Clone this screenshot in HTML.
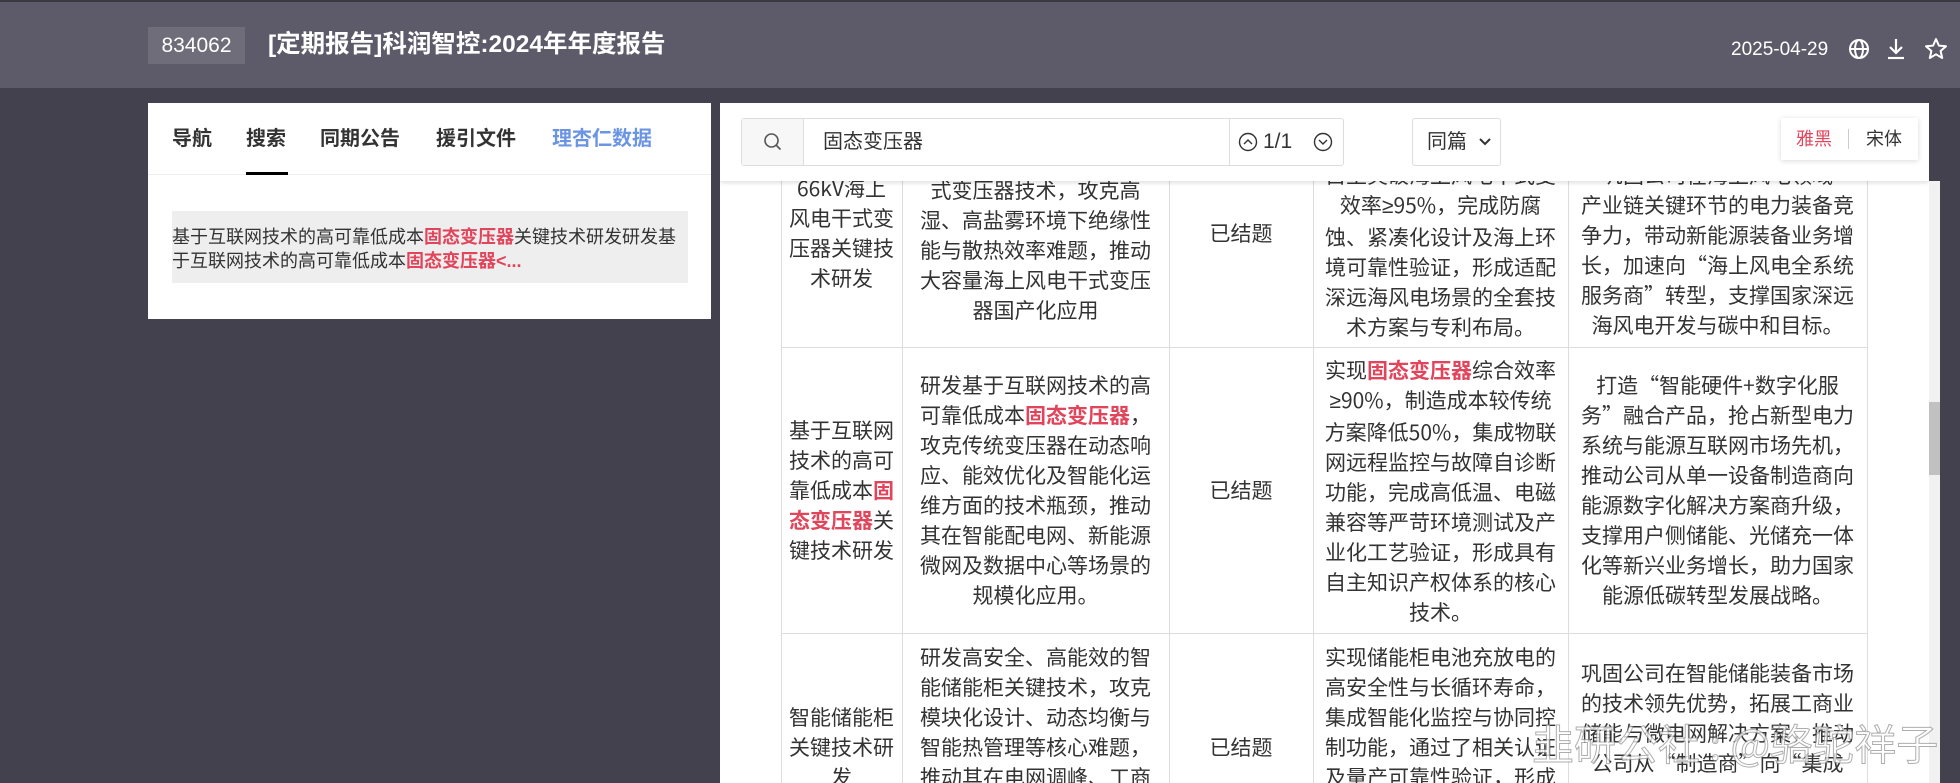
<!DOCTYPE html>
<html><head><meta charset="utf-8"><style>
*{margin:0;padding:0;box-sizing:border-box}
body{width:1960px;height:783px;overflow:hidden;background:#42414d;font-family:"Liberation Sans","Noto Sans CJK SC",sans-serif;color:#333;position:relative}
.abs{position:absolute}
#hdr{left:0;top:0;width:1960px;height:88px;background:#5d5b69;border-top:2px solid #3a3940}
.code{left:148px;top:25px;width:97px;height:37px;background:#6f6d79;color:#fff;font-size:21px;line-height:37px;text-align:center}
.title{left:268px;top:24px;height:37px;line-height:37px;color:#fff;font-size:24.5px;font-weight:bold;white-space:nowrap}
.date{left:1731px;top:36px;color:#fff;font-size:19px;line-height:24px}
#lp{left:148px;top:103px;width:563px;height:216px;background:#fff}
.tab{top:24px;font-size:20px;font-weight:bold;line-height:24px;color:#333}
.res{left:24px;top:108px;width:516px;height:72px;background:#eee;font-size:18px;line-height:24px;padding:14px 0 0 0;color:#333}
.hl{color:#e0455b;font-weight:bold}
.ge{font-family:"Liberation Sans",sans-serif}
#rp{left:720px;top:103px;width:1209px;height:680px;background:#fff;overflow:hidden}
#tb{left:0;top:0;width:1209px;height:78px;background:#fff;box-shadow:0 2px 4px rgba(0,0,0,.12);z-index:5}
.cell{position:absolute;text-align:center;font-size:21px;line-height:30px;white-space:nowrap;color:#333;font-family:"Noto Sans CJK SC","Liberation Sans",sans-serif}
.vl{position:absolute;width:1px;background:#ddd;top:0;height:680px}
.hln{position:absolute;height:1px;background:#ddd;left:61px;width:1087px}
</style></head><body>
<div id="hdr" class="abs">
<div class="abs code">834062</div>
<div class="abs title">[定期报告]科润智控:2024年年度报告</div>
<div class="abs date">2025-04-29</div>
<svg class="abs" style="left:1848px;top:36px" width="22" height="22" viewBox="0 0 22 22" fill="none" stroke="#fff" stroke-width="2"><circle cx="11" cy="11" r="9"/><ellipse cx="11" cy="11" rx="4" ry="9"/><line x1="2" y1="11" x2="20" y2="11"/></svg>
<svg class="abs" style="left:1885px;top:35px" width="22" height="24" viewBox="0 0 22 24" fill="none" stroke="#fff" stroke-width="2.2"><line x1="11" y1="2" x2="11" y2="15"/><polyline points="5,10 11,16 17,10"/><line x1="3" y1="21" x2="19" y2="21"/></svg>
<svg class="abs" style="left:1924px;top:35px" width="24" height="24" viewBox="0 0 24 24" fill="none" stroke="#fff" stroke-width="2" stroke-linejoin="round"><polygon points="12,2 14.9,8.6 22,9.3 16.6,14 18.2,21 12,17.3 5.8,21 7.4,14 2,9.3 9.1,8.6"/></svg>
</div>

<div id="lp" class="abs">
<div class="abs tab" style="left:24px">导航</div>
<div class="abs tab" style="left:98px">搜索</div>
<div class="abs tab" style="left:172px">同期公告</div>
<div class="abs tab" style="left:288px">援引文件</div>
<div class="abs tab" style="left:404px;color:#6b95e3">理杏仁数据</div>
<div class="abs" style="left:0;top:71px;width:563px;height:1px;background:#eee"></div>
<div class="abs" style="left:98px;top:69px;width:42px;height:3px;background:#000"></div>
<div class="abs res">基于互联网技术的高可靠低成本<span class="hl">固态变压器</span>关键技术研发研发基<br>于互联网技术的高可靠低成本<span class="hl">固态变压器&lt;...</span></div>
</div>

<div id="rp" class="abs">
<div id="tb" class="abs">
 <div class="abs" style="left:21px;top:15px;width:603px;height:48px;border:1px solid #ddd;border-radius:3px"></div>
 <div class="abs" style="left:22px;top:16px;width:62px;height:46px;background:#f7f7f7;border-right:1px solid #ddd"></div>
 <svg class="abs" style="left:43px;top:29px" width="20" height="20" viewBox="0 0 20 20" fill="none" stroke="#555" stroke-width="1.6"><circle cx="8.5" cy="8.5" r="6.5"/><line x1="13" y1="13" x2="17.5" y2="17.5"/></svg>
 <div class="abs" style="left:103px;top:25px;font-size:20px;line-height:28px;color:#333">固态变压器</div>
 <div class="abs" style="left:509px;top:16px;width:1px;height:46px;background:#ddd"></div>
 <svg class="abs" style="left:518px;top:29px" width="20" height="20" viewBox="0 0 20 20" fill="none" stroke="#333" stroke-width="1.4"><circle cx="10" cy="10" r="8.5"/><polyline points="6,12 10,8 14,12"/></svg>
 <div class="abs" style="left:543px;top:25px;font-size:21px;line-height:28px">1/1</div>
 <svg class="abs" style="left:593px;top:29px" width="20" height="20" viewBox="0 0 20 20" fill="none" stroke="#333" stroke-width="1.4"><circle cx="10" cy="10" r="8.5"/><polyline points="6,8 10,12 14,8"/></svg>
 <div class="abs" style="left:692px;top:15px;width:89px;height:48px;border:1px solid #ddd;border-radius:3px;font-size:20px;line-height:46px;padding-left:14px">同篇<svg style="position:absolute;left:66px;top:18px" width="12" height="10" viewBox="0 0 12 10" fill="none" stroke="#333" stroke-width="2"><polyline points="1,2 6,7 11,2"/></svg></div>
 <div class="abs" style="left:1061px;top:15px;width:137px;height:42px;background:#fff;box-shadow:0 1px 5px rgba(0,0,0,.15);font-size:18px;line-height:42px">
  <span class="abs" style="left:15px;color:#e0455b">雅黑</span>
  <span class="abs" style="left:67px;top:11px;width:1px;height:20px;background:#ccc"></span>
  <span class="abs" style="left:85px">宋体</span>
 </div>
</div>

<div class="vl" style="left:61px"></div>
<div class="vl" style="left:182px"></div>
<div class="vl" style="left:449px"></div>
<div class="vl" style="left:593px"></div>
<div class="vl" style="left:848px"></div>
<div class="vl" style="left:1147px"></div>
<div class="hln" style="top:244px"></div>
<div class="hln" style="top:530px"></div>

<!-- row1 -->
<div class="cell" style="left:61px;width:121px;top:40px">一体化35kV/<br>66kV海上<br>风电干式变<br>压器关键技<br>术研发</div>
<div class="cell" style="left:182px;width:267px;top:42px">研发海上风电专用干<br>式变压器技术，攻克高<br>湿、高盐雾环境下绝缘性<br>能与散热效率难题，推动<br>大容量海上风电干式变压<br>器国产化应用</div>
<div class="cell" style="left:449px;width:144px;top:115px">已结题</div>
<div class="cell" style="left:593px;width:255px;top:57px">自主突破海上风电干式变<br>效率<span class="ge">≥</span>95%，完成防腐<br>蚀、紧凑化设计及海上环<br>境可靠性验证，形成适配<br>深远海风电场景的全套技<br>术方案与专利布局。</div>
<div class="cell" style="left:848px;width:299px;top:57px">巩固公司在海上风电领域<br>产业链关键环节的电力装备竞<br>争力，带动新能源装备业务增<br>长，加速向“海上风电全系统<br>服务商”转型，支撑国家深远<br>海风电开发与碳中和目标。</div>

<!-- row2 -->
<div class="cell" style="left:61px;width:121px;top:312px">基于互联网<br>技术的高可<br>靠低成本<span class="hl">固</span><br><span class="hl">态变压器</span>关<br>键技术研发</div>
<div class="cell" style="left:182px;width:267px;top:267px">研发基于互联网技术的高<br>可靠低成本<span class="hl">固态变压器</span>，<br>攻克传统变压器在动态响<br>应、能效优化及智能化运<br>维方面的技术瓶颈，推动<br>其在智能配电网、新能源<br>微网及数据中心等场景的<br>规模化应用。</div>
<div class="cell" style="left:449px;width:144px;top:372px">已结题</div>
<div class="cell" style="left:593px;width:255px;top:252px">实现<span class="hl">固态变压器</span>综合效率<br><span class="ge">≥</span>90%，制造成本较传统<br>方案降低50%，集成物联<br>网远程监控与故障自诊断<br>功能，完成高低温、电磁<br>兼容等严苛环境测试及产<br>业化工艺验证，形成具有<br>自主知识产权体系的核心<br>技术。</div>
<div class="cell" style="left:848px;width:299px;top:267px">打造“智能硬件+数字化服<br>务”融合产品，抢占新型电力<br>系统与能源互联网市场先机，<br>推动公司从单一设备制造商向<br>能源数字化解决方案商升级，<br>支撑用户侧储能、光储充一体<br>化等新兴业务增长，助力国家<br>能源低碳转型发展战略。</div>

<!-- row3 -->
<div class="cell" style="left:61px;width:121px;top:599px">智能储能柜<br>关键技术研<br>发</div>
<div class="cell" style="left:182px;width:267px;top:539px">研发高安全、高能效的智<br>能储能柜关键技术，攻克<br>模块化设计、动态均衡与<br>智能热管理等核心难题，<br>推动其在电网调峰、工商</div>
<div class="cell" style="left:449px;width:144px;top:629px">已结题</div>
<div class="cell" style="left:593px;width:255px;top:539px">实现储能柜电池充放电的<br>高安全性与长循环寿命，<br>集成智能化监控与协同控<br>制功能，通过了相关认证<br>及量产可靠性验证，形成</div>
<div class="cell" style="left:848px;width:299px;top:555px">巩固公司在智能储能装备市场<br>的技术领先优势，拓展工商业<br>储能与微电网解决方案，推动<br>公司从“制造商”向“集成</div>
</div>

<div class="abs" style="left:1929px;top:181px;width:11px;height:602px;background:#f1f1f1"></div>
<div class="abs" style="left:1929px;top:402px;width:11px;height:73px;background:#c1c1c1"></div>
<div class="abs" style="left:1940px;top:103px;width:20px;height:680px;background:#42414d"></div>

<div class="abs" style="left:1532px;top:718px;font-size:42px;line-height:50px;color:rgba(255,255,255,.75);-webkit-text-stroke:1px rgba(120,120,120,.6);white-space:nowrap;z-index:9;font-family:'Noto Sans CJK SC',sans-serif">韭研公社 : @骆驼祥子</div>
</body></html>
